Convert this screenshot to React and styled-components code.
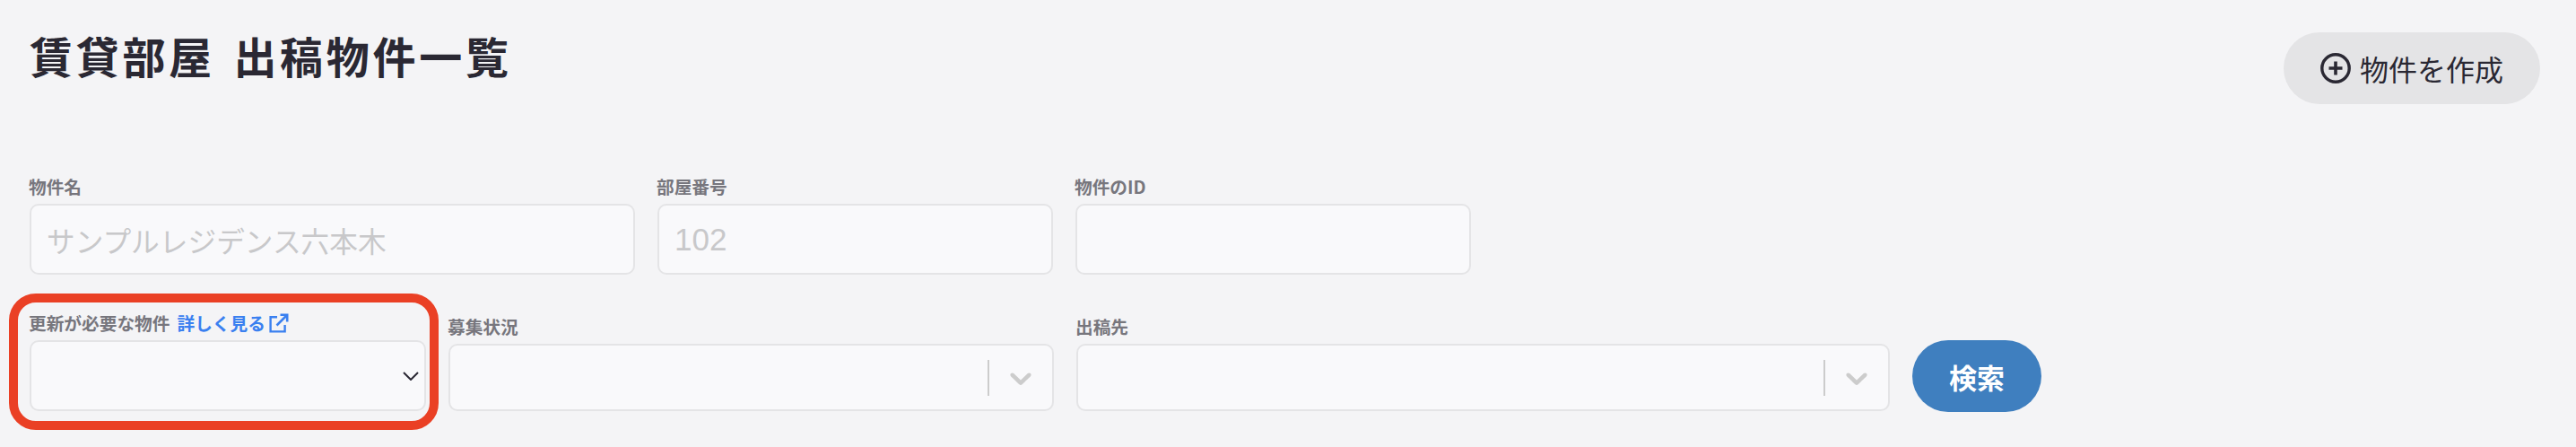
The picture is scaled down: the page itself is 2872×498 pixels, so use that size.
import React from "react";
import styled, { createGlobalStyle } from "styled-components";

const GlobalStyle = createGlobalStyle`
  html, body {
    margin: 0;
    padding: 0;
    background: #f4f4f6;
  }
  body {
    font-family: "Noto Sans CJK JP", "Inter", "Liberation Sans", sans-serif;
    color: #2a2833;
  }
  * {
    box-sizing: border-box;
  }
`;

function PlusCircleIcon() {
  return (
    <svg width="34" height="34" viewBox="0 0 34 34" fill="none">
      <circle cx="17" cy="17" r="15.2" stroke="#2a2833" strokeWidth="3.4" />
      <path d="M17 9.5v15M9.5 17h15" stroke="#2a2833" strokeWidth="3.6" />
    </svg>
  );
}

function ExternalIcon() {
  return (
    <svg width="22" height="22" viewBox="0 0 22 22" fill="none">
      <path d="M9 4.2H1.6v16.2h16V13" stroke="#3a80f0" strokeWidth="2.4" />
      <path d="M8.5 13.5 19.5 2.5M12.5 1.8h7.7v7.7" stroke="#3a80f0" strokeWidth="2.6" />
    </svg>
  );
}

function ThinChevron() {
  return (
    <svg width="18" height="10" viewBox="0 0 18 10" fill="none">
      <path d="M1 1l8 8 8-8" stroke="#2a2833" strokeWidth="2" />
    </svg>
  );
}

function SelectChevron() {
  return (
    <svg width="40" height="40" viewBox="0 0 20 20" fill="#cccccc">
      <path d="M4.516 7.548c0.436-0.446 1.043-0.481 1.576 0l3.908 3.747 3.908-3.747c0.533-0.481 1.141-0.446 1.576 0 0.436 0.445 0.408 1.197 0 1.615-0.406 0.418-4.695 4.502-4.695 4.502-0.217 0.223-0.502 0.335-0.789 0.335s-0.572-0.112-0.791-0.335c0 0-4.287-4.084-4.695-4.502s-0.436-1.17 0-1.615z" />
    </svg>
  );
}

export default function App() {
  return (
    <>
      <GlobalStyle />
      <Page>
        <Header>
          <Title>賃貸部屋 出稿物件一覧</Title>
          <CreateButton>
            <PlusCircleIcon />
            物件を作成
          </CreateButton>
        </Header>
        <Row>
          <Field $width={675}>
            <Label>物件名</Label>
            <Input placeholder="サンプルレジデンス六本木" />
          </Field>
          <Field $width={441}>
            <Label>部屋番号</Label>
            <Input $latin placeholder="102" />
          </Field>
          <Field $width={441}>
            <Label>物件のID</Label>
            <Input />
          </Field>
        </Row>
        <BottomRow>
          <Field $width={442}>
            <HighlightFrame />
            <TopLabel>
              <Label>更新が必要な物件</Label>
              <MoreLink>
                詳しく見る
                <ExternalIcon />
              </MoreLink>
            </TopLabel>
            <NativeSelect>
              <ThinChevron />
            </NativeSelect>
          </Field>
          <Field $width={675}>
            <Label>募集状況</Label>
            <ComboBox>
              <Separator />
              <SelectChevron />
            </ComboBox>
          </Field>
          <Field $width={907}>
            <Label>出稿先</Label>
            <ComboBox>
              <Separator />
              <SelectChevron />
            </ComboBox>
          </Field>
          <SearchButton>検索</SearchButton>
        </BottomRow>
      </Page>
    </>
  );
}

const Page = styled.div`
  width: 2872px;
  height: 498px;
  padding: 36px 40px 0 33px;
  overflow: hidden;
`;

const Header = styled.div`
  display: flex;
  justify-content: space-between;
  align-items: flex-start;
  height: 80px;
`;

const Title = styled.h1`
  margin: 0;
  font-size: 48px;
  line-height: 50px;
  font-weight: 700;
  letter-spacing: 3.7px;
  word-spacing: 6px;
  white-space: pre;
  color: #2a2833;
`;

const CreateButton = styled.button`
  display: flex;
  align-items: center;
  justify-content: center;
  gap: 10px;
  width: 286px;
  height: 80px;
  border: none;
  border-radius: 40px;
  background: #e4e4e6;
  color: #2a2833;
  font-family: inherit;
  font-size: 32px;
  font-weight: 400;
`;

const Row = styled.div`
  display: flex;
  gap: 25px;
  margin-top: 76px;
`;

const BottomRow = styled.div`
  display: flex;
  align-items: flex-end;
  gap: 25px;
  margin-top: 38px;
`;

const Field = styled.div`
  position: relative;
  display: flex;
  flex-direction: column;
  width: ${(p) => p.$width}px;
`;

const HighlightFrame = styled.span`
  position: absolute;
  left: -23px;
  right: -14px;
  top: -17px;
  bottom: -21px;
  border: 10px solid #ea4025;
  border-radius: 30px;
  pointer-events: none;
`;

const Label = styled.label`
  font-size: 19.7px;
  line-height: 31px;
  margin-bottom: 4px;
  margin-left: -1px;
  font-weight: 700;
  color: #77767d;
`;

const TopLabel = styled.div`
  display: flex;
  align-items: flex-start;
  gap: 8px;
`;

const MoreLink = styled.a`
  display: flex;
  align-items: center;
  gap: 4px;
  font-size: 19.7px;
  line-height: 31px;
  font-weight: 700;
  color: #3a80f0;
`;

const Input = styled.input`
  width: 100%;
  height: 79px;
  padding: 0 17px;
  border: 2px solid #e4e4e6;
  border-radius: 10px;
  background: #f9f9fb;
  font-family: ${(p) => (p.$latin ? '"Liberation Sans", sans-serif' : "inherit")};
  font-size: ${(p) => (p.$latin ? "35px" : "31.7px")};
  color: #2a2833;
  &::placeholder {
    color: #c8c8ca;
    opacity: 1;
  }
`;

const NativeSelect = styled.div`
  display: flex;
  align-items: center;
  justify-content: flex-end;
  height: 79px;
  padding-right: 6px;
  border: 2px solid #e4e4e6;
  border-radius: 10px;
  background: #f9f9fb;
`;

const ComboBox = styled.div`
  display: flex;
  align-items: center;
  justify-content: flex-end;
  gap: 15px;
  height: 75px;
  padding-right: 15px;
  border: 2px solid #e4e4e6;
  border-radius: 10px;
  background: #f9f9fb;
`;

const Separator = styled.span`
  width: 2px;
  height: 40px;
  background: #cccccc;
`;

const SearchButton = styled.button`
  width: 144px;
  height: 80px;
  margin-bottom: -1px;
  border: none;
  border-radius: 40px;
  background: #3f7fbf;
  color: #ffffff;
  font-family: inherit;
  font-size: 31px;
  font-weight: 700;
`;
